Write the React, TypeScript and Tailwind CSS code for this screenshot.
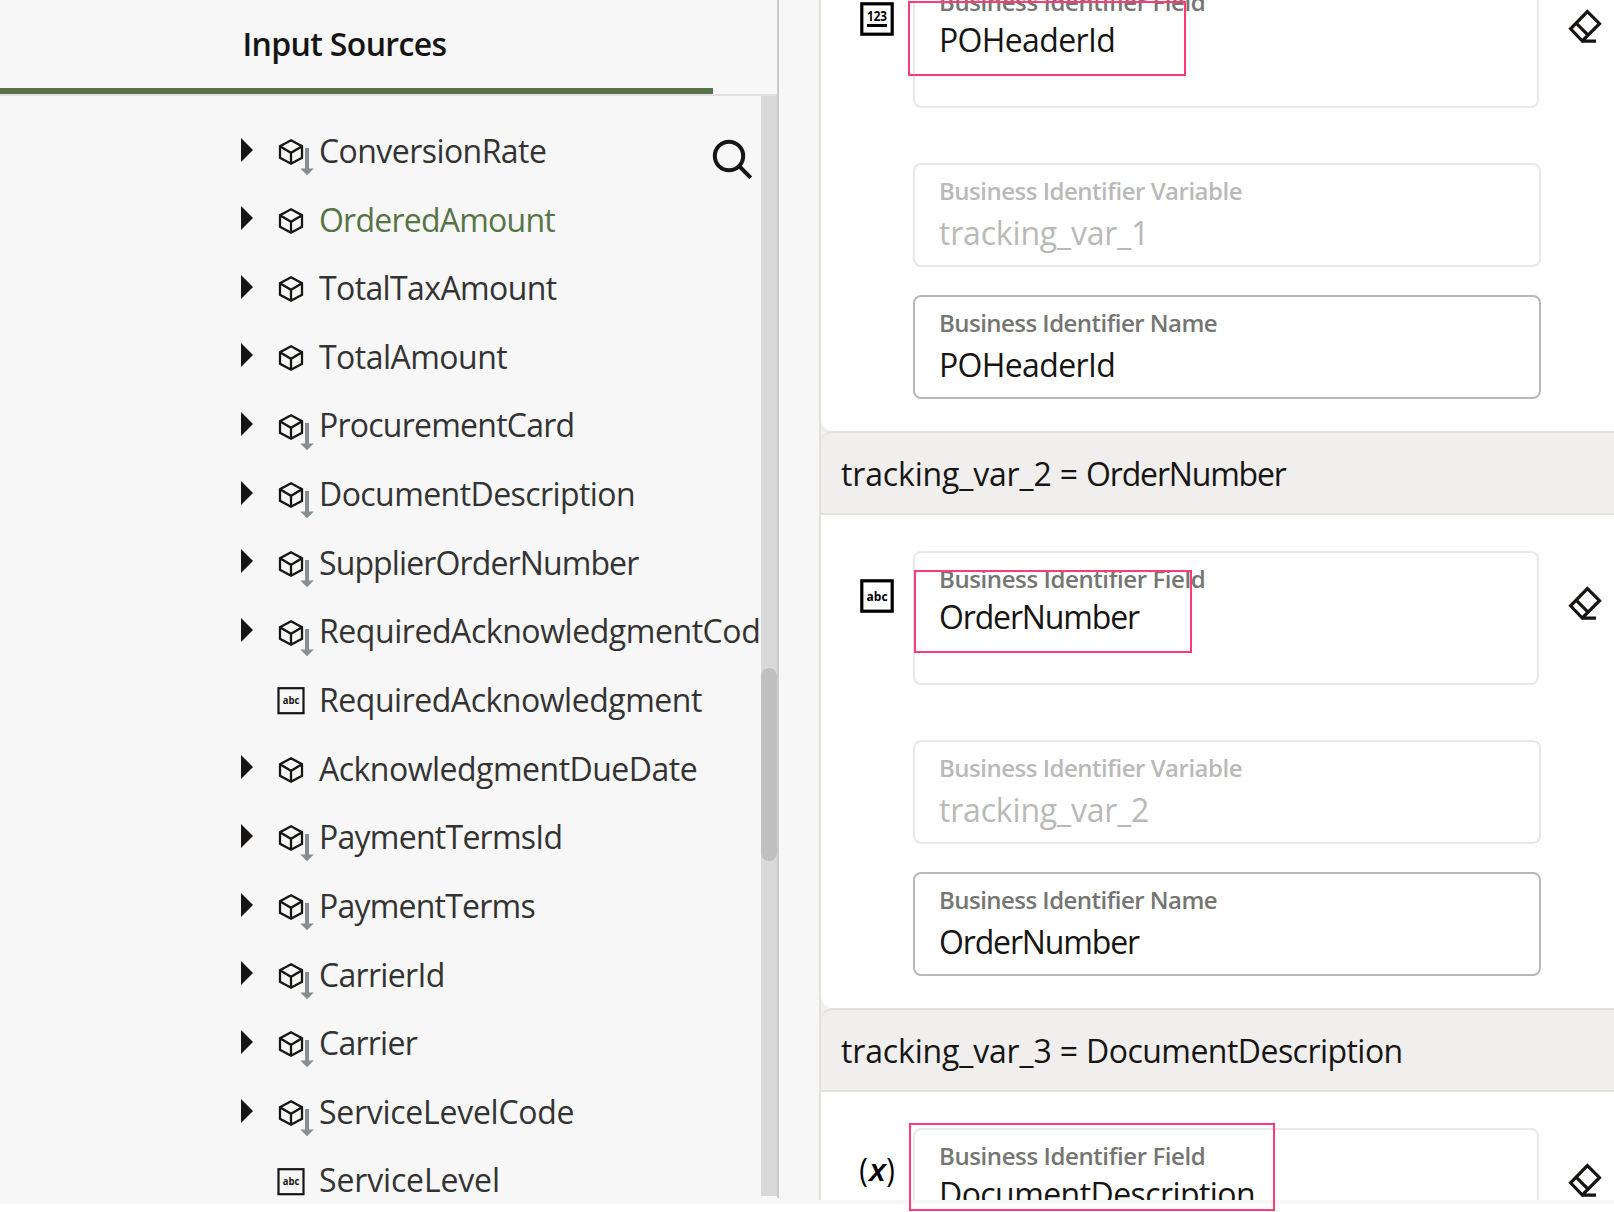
import React from "react";

type RowKind = "cube" | "cubeOptional" | "text";

const rows: { label: string; kind: RowKind; cls: string }[] = [
  { label: "", kind: "cube", cls: "" },
  { label: "ConversionRate", kind: "cubeOptional", cls: "tracking-[-0.56px]" },
  { label: "OrderedAmount", kind: "cube", cls: "tracking-[-0.77px] text-[#567446]" },
  { label: "TotalTaxAmount", kind: "cube", cls: "tracking-[-0.61px]" },
  { label: "TotalAmount", kind: "cube", cls: "tracking-[-0.52px]" },
  { label: "ProcurementCard", kind: "cubeOptional", cls: "tracking-[-0.76px]" },
  { label: "DocumentDescription", kind: "cubeOptional", cls: "tracking-[-0.57px]" },
  { label: "SupplierOrderNumber", kind: "cubeOptional", cls: "tracking-[-0.88px]" },
  { label: "RequiredAcknowledgmentCode", kind: "cubeOptional", cls: "tracking-[-0.44px]" },
  { label: "RequiredAcknowledgment", kind: "text", cls: "tracking-[-0.47px]" },
  { label: "AcknowledgmentDueDate", kind: "cube", cls: "tracking-[-0.51px]" },
  { label: "PaymentTermsId", kind: "cubeOptional", cls: "tracking-[-0.74px]" },
  { label: "PaymentTerms", kind: "cubeOptional", cls: "tracking-[-0.78px]" },
  { label: "CarrierId", kind: "cubeOptional", cls: "tracking-[-0.68px]" },
  { label: "Carrier", kind: "cubeOptional", cls: "tracking-[-0.75px]" },
  { label: "ServiceLevelCode", kind: "cubeOptional", cls: "tracking-[-0.27px]" },
  { label: "ServiceLevel", kind: "text", cls: "tracking-[-0.15px]" },
];

function RowIcon({ kind }: { kind: RowKind }) {
  return (
    <svg viewBox="0 0 37 38" className="mt-[15px] h-[38px] w-[37px] shrink-0" fill="none">
      {kind === "text" ? (
        <>
          <rect x="1.5" y="1.2" width="25" height="25" stroke="#161513" strokeWidth="2.2" />
          <text x="5.8" y="17.3" fontSize="10.5" fontWeight="700" fill="#161513" textLength="16.6" lengthAdjust="spacingAndGlyphs">
            abc
          </text>
        </>
      ) : (
        <path
          d="M14 2.2 25 8.3V19.7L14 25.8 3 19.7V8.3ZM3 8.3 14 14.8 25 8.3M14 14.8V25.8"
          stroke="#161513"
          strokeWidth="2.3"
        />
      )}
      {kind === "cubeOptional" && <path d="M28 10h4v20.6h4.8L30 37.2 23.4 30.6H28Z" fill="#868e91" />}
    </svg>
  );
}

function SourceRow({ label, kind, cls }: { label: string; kind: RowKind; cls: string }) {
  return (
    <div className="flex h-[68.65px] shrink-0 items-center pl-[241px]">
      <svg viewBox="0 0 12 24" className="mr-6 h-6 w-3 shrink-0">
        {kind !== "text" && <path d="M0 0 12 12 0 24Z" fill="#161513" />}
      </svg>
      <RowIcon kind={kind} />
      <span className={`mt-[2.6px] ml-[5px] text-[32px] leading-10 whitespace-nowrap ${cls}`}>{label}</span>
    </div>
  );
}

function NumberIcon() {
  return (
    <svg viewBox="0 0 34 34" className="size-[34px]">
      <rect x="1.8" y="1.8" width="30.4" height="30.4" fill="none" stroke="#000" strokeWidth="3.2" />
      <text x="7" y="19.2" fontSize="13.5" fontWeight="700" textLength="20" lengthAdjust="spacingAndGlyphs">
        123
      </text>
      <path d="M7 22h20v3H7Z" />
    </svg>
  );
}

function StringIcon() {
  return (
    <svg viewBox="0 0 34 34" className="size-[34px]">
      <rect x="1.8" y="1.8" width="30.4" height="30.4" fill="none" stroke="#000" strokeWidth="3.2" />
      <text x="6.6" y="21.8" fontSize="13" fontWeight="700" textLength="21" lengthAdjust="spacingAndGlyphs">
        abc
      </text>
    </svg>
  );
}

function ExpressionIcon() {
  return (
    <svg viewBox="0 0 34 34" className="size-[34px]">
      <text x="-0.8" y="26" fontSize="33" fontWeight="500" textLength="8.6" lengthAdjust="spacingAndGlyphs">(</text>
      <text x="9" y="25.3" fontSize="31" fontWeight="600" fontStyle="italic" textLength="17" lengthAdjust="spacingAndGlyphs">x</text>
      <text x="26.2" y="26" fontSize="33" fontWeight="500" textLength="8.6" lengthAdjust="spacingAndGlyphs">)</text>
    </svg>
  );
}

function EraserIcon() {
  return (
    <svg viewBox="0 0 34 34" className="size-[34px]" fill="none" stroke="#161513" strokeWidth="3.2">
      <path d="M19.4 2.6 31.5 14.7 14.3 32 2.6 19.8ZM8.4 14.4 19.8 25.8M13.5 32.2H28" />
    </svg>
  );
}

const fieldLabel = "text-2xl leading-6 font-semibold whitespace-nowrap";
const fieldValue = "text-[32px] leading-10 whitespace-nowrap";

function Section(p: {
  title: string;
  titleCls: string;
  variable: string;
  variableCls: string;
  name: string;
  nameCls: string;
  icon: React.ReactNode;
}) {
  return (
    <section className="bg-[#f0efed]">
      <header className="flex h-[84px] items-center rounded-tl-xl border-y-2 border-[#e2e1dd] pl-5">
        <h2 className="pt-[2px] text-[32px] leading-10 tracking-[-0.15px] whitespace-nowrap text-[#161513]">
          {p.variable} = <span className={p.titleCls}>{p.title}</span>
        </h2>
      </header>
      <div className="rounded-bl-xl bg-white pt-9 pb-8">
        <div className="flex pl-[39px]">
          <div className="mt-7 mr-[19px] size-[34px]">{p.icon}</div>
          <div className="h-[134px] w-[626px] rounded-lg border-2 border-[#e8e8e8] pt-[14px] pl-6">
            <div className={`${fieldLabel} tracking-[-0.4px] text-[#757573]`}>Business Identifier Field</div>
            <div className={`${fieldValue} mt-[6px] text-[#161513] ${p.nameCls}`}>{p.name}</div>
          </div>
          <div className="mt-[35px] ml-[29px]">
            <EraserIcon />
          </div>
        </div>
        <div className="ml-[92px] flex w-[628px] flex-col gap-7 pt-[55px]">
          <div className="h-[104px] rounded-lg border-2 border-[#e8e8e8] pt-[14px] pl-6 text-[#b9b9b8]">
            <div className={`${fieldLabel} tracking-[-0.49px]`}>Business Identifier Variable</div>
            <div className={`${fieldValue} mt-[10px] ${p.variableCls}`}>{p.variable}</div>
          </div>
          <div className="h-[104px] rounded-lg border-2 border-[#b8b8b7] pt-[14px] pl-6">
            <div className={`${fieldLabel} tracking-[-0.53px] text-[#757573]`}>Business Identifier Name</div>
            <div className={`${fieldValue} mt-[10px] text-[#161513] ${p.nameCls}`}>{p.name}</div>
          </div>
        </div>
      </div>
    </section>
  );
}

export default function App() {
  return (
    <div className="relative h-[1212px] w-[1614px] overflow-hidden bg-white font-['Open_Sans',sans-serif]">
      <div className="flex h-[1204px] bg-[#f7f7f7]">
        <aside className="flex h-[1204px] w-[777px] shrink-0 flex-col">
          <div className="flex h-24 shrink-0 flex-col border-b-2 border-[#e0e0e0]">
            <div className="flex h-[88px] items-center pl-[242.5px]">
              <h1 className="text-[32px] leading-10 font-semibold tracking-[-0.66px] text-[#161513]">Input Sources</h1>
            </div>
            <div className="h-1.5 w-[713px] bg-[#567446]" />
          </div>
          <div className="flex h-[1108px]">
            <div className="relative flex h-full w-[761px] flex-col overflow-hidden text-[#333333]">
              <div className="-mt-[49.4px] flex flex-col">
                {rows.map((r, i) => (
                  <SourceRow key={i} {...r} />
                ))}
              </div>
              <svg viewBox="0 0 40 40" className="absolute top-[43px] left-[712px] size-10" fill="none" stroke="#161513" strokeWidth="4">
                <circle cx="17" cy="17" r="14.2" />
                <path d="M27 27 38.8 38.8" />
              </svg>
            </div>
            <div className="h-[1100px] w-4 bg-[#d9d9d9] pt-[572px]">
              <div className="h-[193px] rounded-lg bg-[#c0c0be]" />
            </div>
          </div>
        </aside>
        <div className="h-[1198px] w-0.5 shrink-0 bg-[#cbcbcb]" />
        <main className="ml-10 h-[1200px] flex-1 overflow-hidden border-l-2 border-[#e2e1dc] bg-white">
          <div className="-mt-[146px]">
            <Section
              title="POHeaderId"
              titleCls="tracking-[-0.6px]"
              variable="tracking_var_1"
              variableCls="tracking-[-0.18px]"
              name="POHeaderId"
              nameCls="tracking-[-0.65px]"
              icon={<NumberIcon />}
            />
            <Section
              title="OrderNumber"
              titleCls="tracking-[-1.17px]"
              variable="tracking_var_2"
              variableCls="tracking-[-0.18px]"
              name="OrderNumber"
              nameCls="tracking-[-1.15px]"
              icon={<StringIcon />}
            />
            <Section
              title="DocumentDescription"
              titleCls="tracking-[-0.54px]"
              variable="tracking_var_3"
              variableCls="tracking-[-0.18px]"
              name="DocumentDescription"
              nameCls="tracking-[-0.57px]"
              icon={<ExpressionIcon />}
            />
          </div>
        </main>
      </div>
      <div className="absolute top-px left-[908px] h-[75px] w-[278px] border-2 border-[#ff3b76]" />
      <div className="absolute top-[570px] left-[914px] h-[83px] w-[278px] border-2 border-[#ff3b76]" />
      <div className="absolute top-[1123px] left-[909px] h-[88px] w-[366px] border-2 border-[#ff3b76]" />
    </div>
  );
}
